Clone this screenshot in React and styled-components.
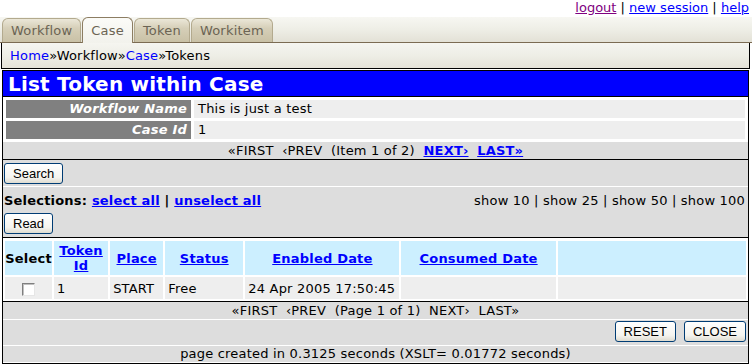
import React from "react";
import styled, { createGlobalStyle } from "styled-components";

const GlobalStyle = createGlobalStyle`
  body {
    margin: 0;
    background: #fff;
    font-family: "DejaVu Sans", Verdana, sans-serif;
    font-size: 13px;
    letter-spacing: 0.2px;
    color: #000;
  }
  a { color: #0000ff; }
`;

const Page = styled.div`
  width: 752px;
`;

const TopLinks = styled.div`
  height: 17px;
  line-height: 15px;
  text-align: right;
  padding-right: 3px;
  letter-spacing: 0;
  a.visited { color: #800080; }
`;

const TabBar = styled.div`
  display: flex;
  align-items: flex-end;
  gap: 1px;
  height: 25px;
  padding-left: 2px;
  background: linear-gradient(#f7f7f2, #eeeee6 50%, #e3e1d6);
  border-bottom: 1px solid #7b6b52;
`;

const Tab = styled.div`
  position: relative;
  box-sizing: border-box;
  height: ${(p) => (p.$active ? 26 : 24)}px;
  margin-bottom: ${(p) => (p.$active ? -1 : 0)}px;
  padding: 0 8px;
  display: flex;
  align-items: center;
  border: 1px solid ${(p) => (p.$active ? "#8c7d62" : "#b3aa8e")};
  border-bottom: none;
  border-radius: 6px 6px 0 0;
  background: ${(p) =>
    p.$active
      ? "linear-gradient(#fbfbf8, #f2f2ec)"
      : "linear-gradient(#ebe7d8, #d6cfb8 40%, #c9c1a6)"};
  color: #6b6454;
`;

const Breadcrumb = styled.div`
  box-sizing: border-box;
  margin-left: 1px;
  width: 749px;
  height: 26px;
  padding-left: 8px;
  line-height: 25px;
  background: linear-gradient(#f5f5f0, #eeeee6 50%, #e4e2d8);
  border: 1px solid #000;
  border-top: none;
  a { text-decoration: none; }
`;

const Main = styled.div`
  box-sizing: border-box;
  margin: 1px 0 0 2px;
  width: 747px;
  border: 1px solid #000;
  border-top: none;
  background: #fff;
`;

const TitleBar = styled.div`
  height: 25px;
  margin: 0 -1px;
  padding-left: 5px;
  border: 1px solid #000;
  background: #0000ff;
  color: #fff;
  font-size: 20px;
  font-weight: bold;
  line-height: 27px;
`;

const InfoTable = styled.table`
  width: 100%;
  border-spacing: 3px;
  td {
    height: 18px;
    padding: 0 4px;
    line-height: 18px;
  }
`;

const Label = styled.td`
  width: 177px;
  background: #808080;
  color: #fff;
  font-weight: bold;
  font-style: italic;
  text-align: right;
`;

const Value = styled.td`
  background: #eeeeee;
`;

const GrayRow = styled.div`
  box-sizing: border-box;
  height: ${(p) => p.$h}px;
  background: #dddddd;
  border-bottom: 1px solid ${(p) => (p.$dark ? "#000" : "#fff")};
  border-top: ${(p) => (p.$topLine ? "1px solid #000" : "none")};
  line-height: ${(p) => p.$h - (p.$topLine ? 2 : 1)}px;
  text-align: ${(p) => p.$align || "left"};
  white-space: nowrap;
`;

const Pager = styled.span`
  white-space: pre;
  a { font-weight: bold; }
`;

const Button = styled.button`
  height: 21px;
  padding: 0 8px;
  border: 1px solid #003c74;
  border-radius: 3px;
  background: linear-gradient(#ffffff, #f5f4ef 70%, #dedbd0);
  font-family: "Liberation Sans", Arial, sans-serif;
  font-size: 13px;
  letter-spacing: 0;
  color: #000;
  vertical-align: top;
`;

const ToolRow = styled.div`
  box-sizing: border-box;
  height: 27px;
  padding: 3px 0 0 1px;
  background: #dddddd;
  border-bottom: 1px solid #fff;
`;

const SelectRow = styled.div`
  box-sizing: border-box;
  height: 51px;
  padding: 0 3px 0 1px;
  background: #dddddd;
  border-bottom: 1px solid #000;
`;

const SelectLine = styled.div`
  display: flex;
  justify-content: space-between;
  height: 26px;
  line-height: 27px;
`;

const Selections = styled.span`
  font-weight: bold;
`;

const DataTable = styled.table`
  width: 100%;
  margin-top: 1px;
  border-spacing: 2px;
  table-layout: fixed;
  th {
    height: 34px;
    padding: 0;
    background: #ccefff;
    font-weight: bold;
    line-height: 15px;
  }
  td {
    height: 22px;
    padding: 0 3px;
    background: #eeeeee;
    white-space: nowrap;
  }
`;

const CheckCell = styled.td`
  text-align: center;
`;

const Check = styled.span`
  display: inline-block;
  width: 11px;
  height: 11px;
  vertical-align: middle;
  background: #fff;
  border: 1px solid;
  border-color: #7f7f7f #e6e6e6 #e6e6e6 #7f7f7f;
  box-shadow: inset 1px 1px 0 #c0c0c0;
`;

const ActionRow = styled.div`
  box-sizing: border-box;
  height: 26px;
  padding: 1px 2px 0 0;
  display: flex;
  justify-content: flex-end;
  gap: 8px;
  background: #dddddd;
  border-bottom: 1px solid #fff;
`;

const columns = [
  { w: 47, label: "Select" },
  { w: 54, label: "Token Id", link: true },
  { w: 53, label: "Place", link: true },
  { w: 78, label: "Status", link: true },
  { w: 154, label: "Enabled Date", link: true },
  { w: 154, label: "Consumed Date", link: true },
  { w: 188, label: "" },
];

export default function App() {
  return (
    <Page>
      <GlobalStyle />
      <TopLinks>
        <a className="visited" href="#">logout</a> | <a href="#">new session</a> |{" "}
        <a href="#">help</a>
      </TopLinks>
      <TabBar>
        <Tab>Workflow</Tab>
        <Tab $active>Case</Tab>
        <Tab>Token</Tab>
        <Tab>Workitem</Tab>
      </TabBar>
      <Breadcrumb>
        <a href="#">Home</a>»Workflow»<a href="#">Case</a>»Tokens
      </Breadcrumb>
      <Main>
        <TitleBar>List Token within Case</TitleBar>
        <InfoTable>
          <tbody>
            <tr>
              <Label>Workflow Name</Label>
              <Value>This is just a test</Value>
            </tr>
            <tr>
              <Label>Case Id</Label>
              <Value>1</Value>
            </tr>
          </tbody>
        </InfoTable>
        <GrayRow $h={18} $dark $align="center">
          <Pager>
            {"«FIRST  ‹PREV  (Item 1 of 2)  "}
            <a href="#">NEXT›</a>
            {"  "}
            <a href="#">LAST»</a>
          </Pager>
        </GrayRow>
        <ToolRow>
          <Button>Search</Button>
        </ToolRow>
        <SelectRow>
          <SelectLine>
            <Selections>
              Selections: <a href="#">select all</a> | <a href="#">unselect all</a>
            </Selections>
            <span>show 10 | show 25 | show 50 | show 100</span>
          </SelectLine>
          <Button>Read</Button>
        </SelectRow>
        <DataTable>
          <colgroup>
            {columns.map((c, i) => (
              <col key={i} style={{ width: c.w }} />
            ))}
          </colgroup>
          <thead>
            <tr>
              {columns.map((c, i) => (
                <th key={i}>{c.link ? <a href="#">{c.label}</a> : c.label}</th>
              ))}
            </tr>
          </thead>
          <tbody>
            <tr>
              <CheckCell>
                <Check />
              </CheckCell>
              <td>1</td>
              <td>START</td>
              <td>Free</td>
              <td>24 Apr 2005 17:50:45</td>
              <td></td>
              <td></td>
            </tr>
          </tbody>
        </DataTable>
        <GrayRow $h={19} $topLine $align="center">
          <Pager>{"«FIRST  ‹PREV  (Page 1 of 1)  NEXT›  LAST»"}</Pager>
        </GrayRow>
        <ActionRow>
          <Button>RESET</Button>
          <Button>CLOSE</Button>
        </ActionRow>
        <GrayRow $h={17} $align="center">
          page created in 0.3125 seconds (XSLT= 0.01772 seconds)
        </GrayRow>
      </Main>
    </Page>
  );
}
